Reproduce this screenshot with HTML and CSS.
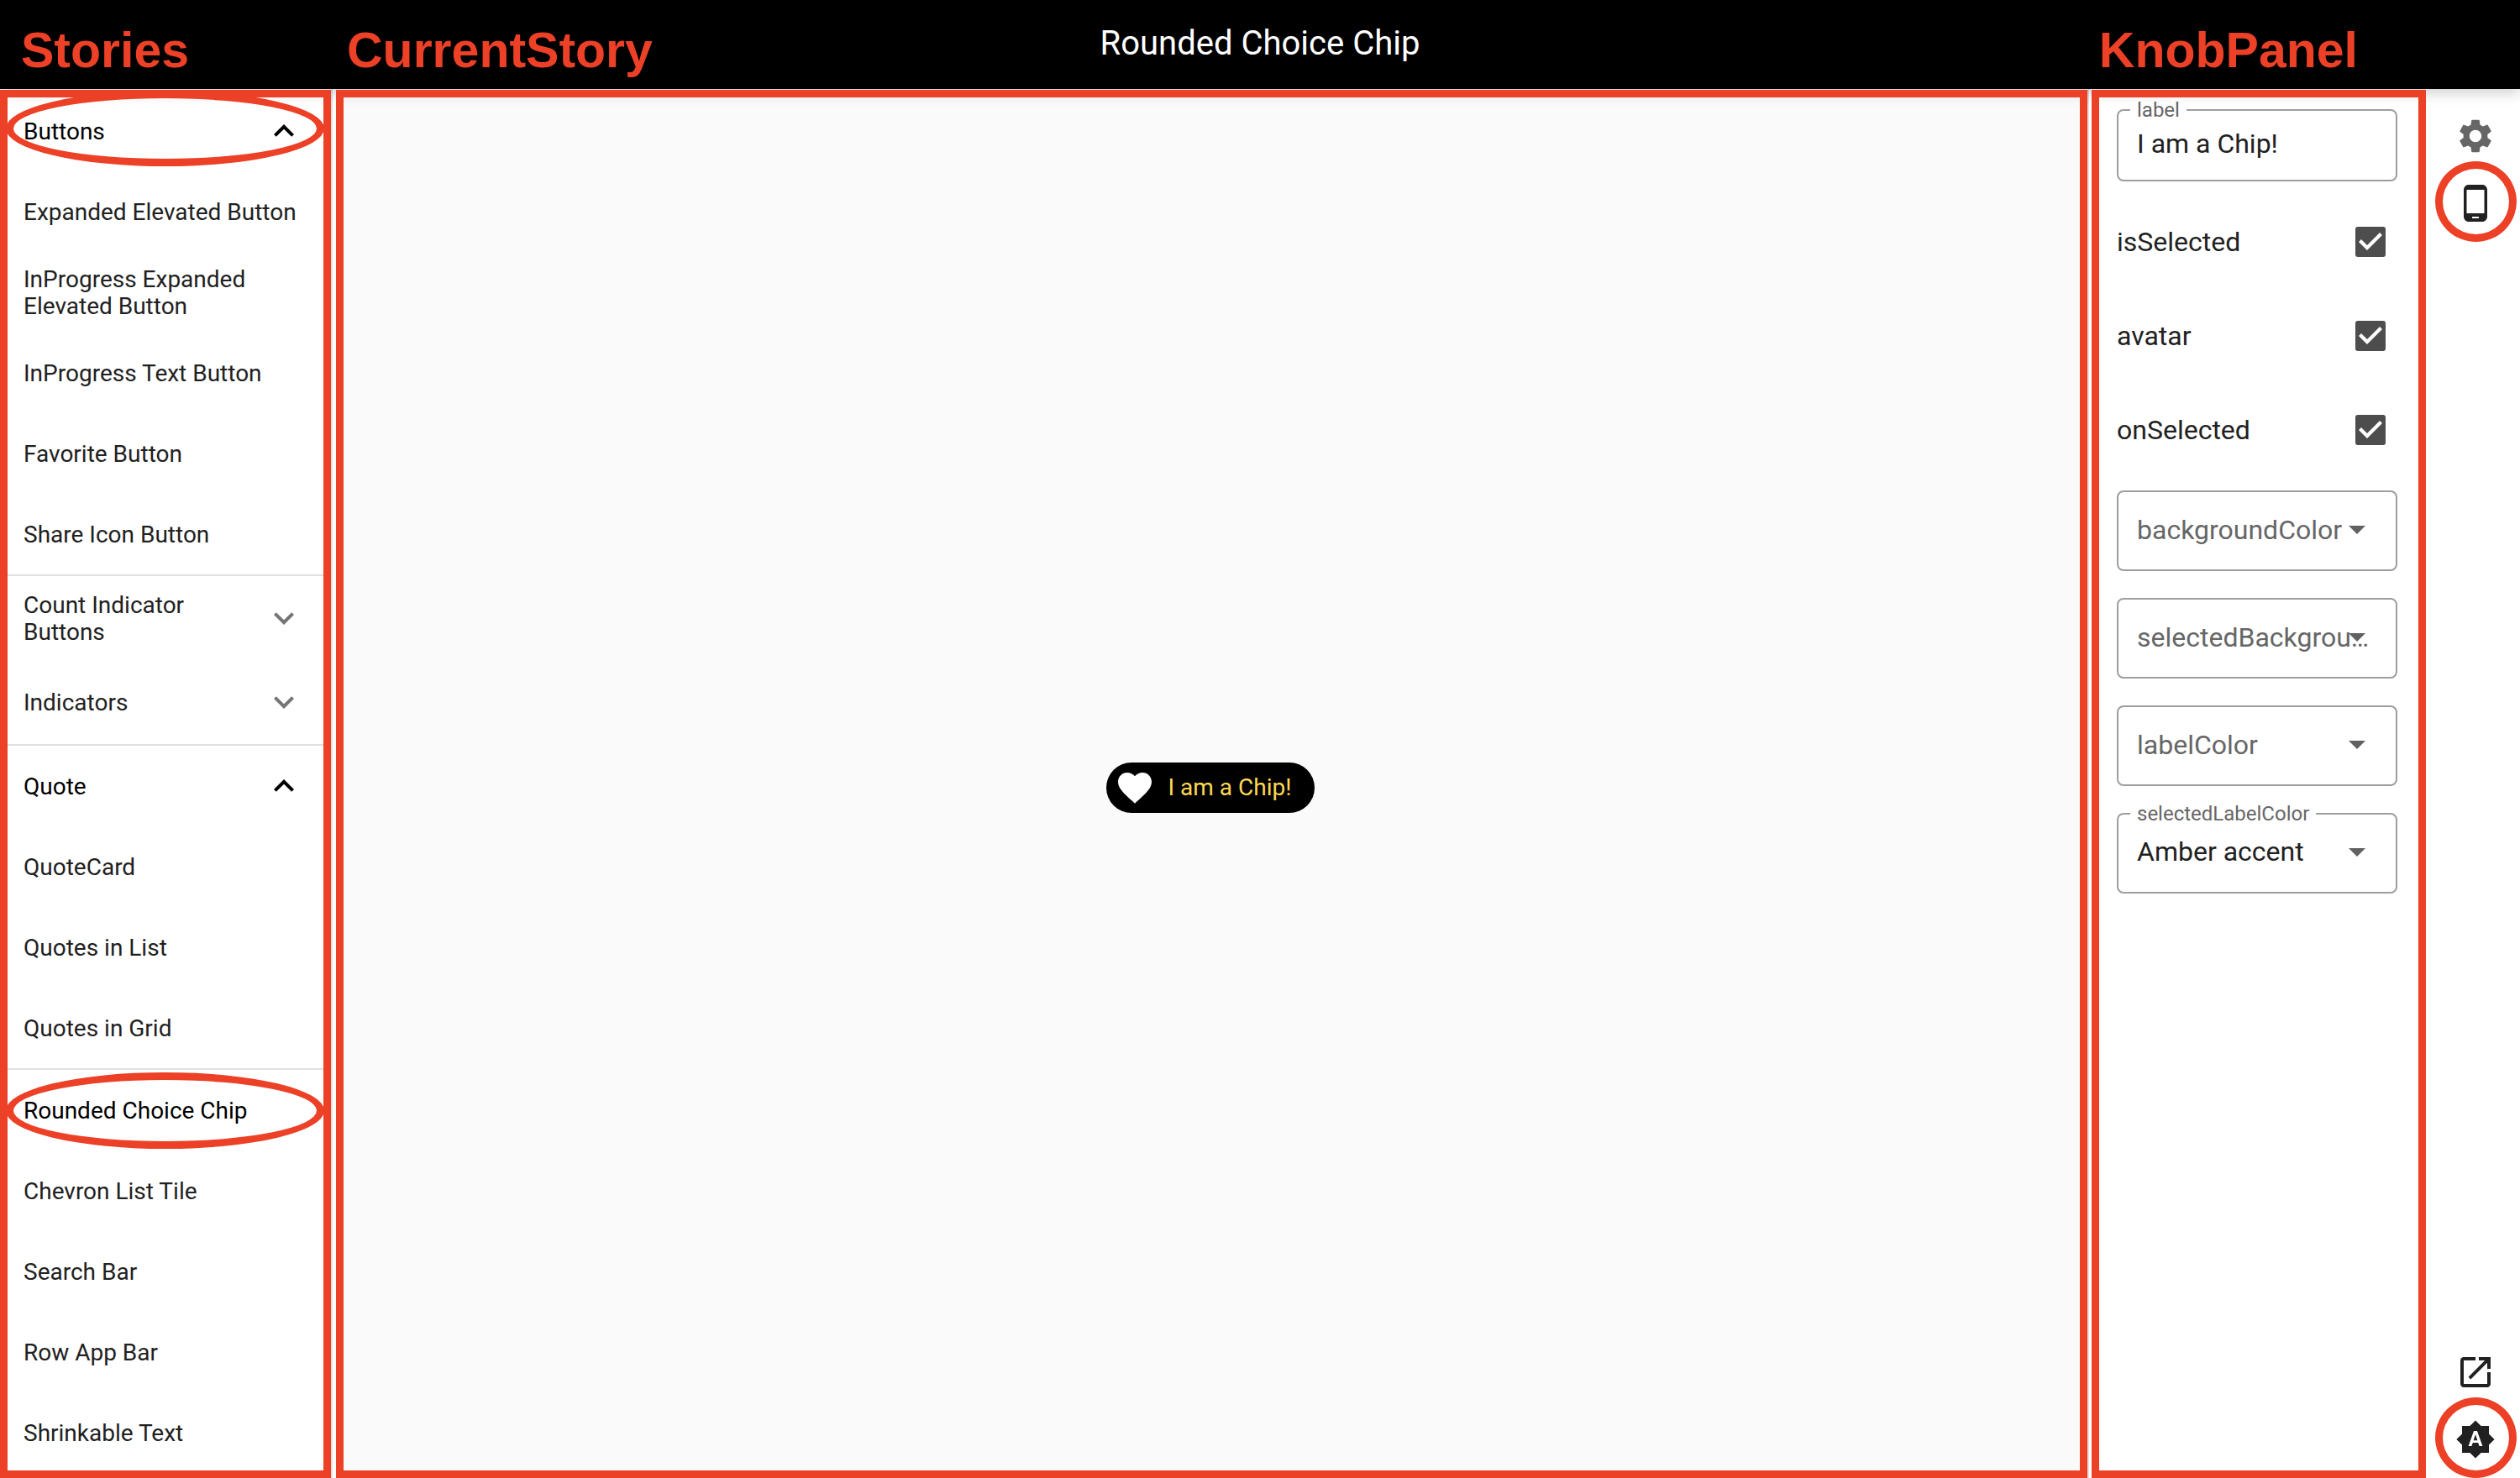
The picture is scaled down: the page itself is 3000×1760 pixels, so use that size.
FILE: index.html
```html
<!DOCTYPE html>
<html lang="en">
<head>
<meta charset="utf-8">
<title>Rounded Choice Chip</title>
<meta name="viewport" content="width=device-width, initial-scale=1">
<link rel="stylesheet" href="styles.css">
</head>
<body>
<svg class="sprite" aria-hidden="true">
  <symbol id="less" viewBox="0 0 24 24"><path d="M12 8l-6 6 1.410 1.410L12 10.830l4.590 4.580L18 14z"/></symbol>
  <symbol id="more" viewBox="0 0 24 24"><path d="M16.590 8.590L12 13.170 7.410 8.590 6 10l6 6 6-6z"/></symbol>
  <symbol id="drop" viewBox="0 0 24 24"><path d="M7 10l5 5 5-5z"/></symbol>
</svg>
<div class="app">
  <header class="topbar">
    <div class="notes notes-start">
      <span class="note note-stories">Stories</span>
      <span class="note">CurrentStory</span>
    </div>
    <h1 class="title">Rounded Choice Chip</h1>
    <div class="notes notes-end"><span class="note">KnobPanel</span></div>
  </header>

  <div class="workspace">
    <nav class="stories framed" aria-label="Stories">
      <details class="group" open>
        <summary class="row ringed">Buttons<svg class="icon"><use href="#less"/></svg></summary>
        <a class="row" href="#expanded-elevated-button">Expanded Elevated Button</a>
        <a class="row" href="#inprogress-expanded-elevated-button">InProgress Expanded Elevated Button</a>
        <a class="row" href="#inprogress-text-button">InProgress Text Button</a>
        <a class="row" href="#favorite-button">Favorite Button</a>
        <a class="row" href="#share-icon-button">Share Icon Button</a>
      </details>
      <details class="group">
        <summary class="row">Count Indicator Buttons<svg class="icon"><use href="#more"/></svg></summary>
      </details>
      <details class="group">
        <summary class="row">Indicators<svg class="icon"><use href="#more"/></svg></summary>
      </details>
      <details class="group" open>
        <summary class="row">Quote<svg class="icon"><use href="#less"/></svg></summary>
        <a class="row" href="#quote-card">QuoteCard</a>
        <a class="row" href="#quotes-in-list">Quotes in List</a>
        <a class="row" href="#quotes-in-grid">Quotes in Grid</a>
      </details>
      <a class="row row-current ringed" href="#rounded-choice-chip" aria-current="page">Rounded Choice Chip</a>
      <a class="row" href="#chevron-list-tile">Chevron List Tile</a>
      <a class="row" href="#search-bar">Search Bar</a>
      <a class="row" href="#row-app-bar">Row App Bar</a>
      <a class="row" href="#shrinkable-text">Shrinkable Text</a>
    </nav>
    <div class="divider"></div>

    <main class="story framed">
      <button class="chip" type="button" aria-pressed="true">
        <svg class="icon" viewBox="0 0 24 24"><path d="M12 21.350l-1.450-1.320C5.400 15.360 2 12.280 2 8.500 2 5.420 4.420 3 7.500 3c1.740 0 3.410.810 4.500 2.090C13.090 3.810 14.760 3 16.500 3 19.580 3 22 5.420 22 8.500c0 3.780-3.400 6.860-8.550 11.540L12 21.350z"/></svg>
        I am a Chip!
      </button>
    </main>
    <div class="divider divider-narrow"></div>

    <form class="knobs framed" aria-label="Knobs">
      <div class="field field-text">
        <input class="control" id="label" type="text" value="I am a Chip!">
        <label class="float" for="label">label</label>
      </div>
      <div class="checks">
        <label class="check">isSelected<input type="checkbox" checked></label>
        <label class="check">avatar<input type="checkbox" checked></label>
        <label class="check">onSelected<input type="checkbox" checked></label>
      </div>
      <div class="selects">
        <div class="field">
          <select class="control" id="bg"><option></option></select>
          <label class="hint" for="bg">backgroundColor</label>
          <svg class="arrow"><use href="#drop"/></svg>
        </div>
        <div class="field">
          <select class="control" id="sbg"><option></option></select>
          <label class="hint" for="sbg">selectedBackgroundColor</label>
          <svg class="arrow"><use href="#drop"/></svg>
        </div>
        <div class="field">
          <select class="control" id="lc"><option></option></select>
          <label class="hint" for="lc">labelColor</label>
          <svg class="arrow"><use href="#drop"/></svg>
        </div>
        <div class="field">
          <select class="control" id="slc"><option>Amber accent</option></select>
          <label class="float" for="slc">selectedLabelColor</label>
          <svg class="arrow"><use href="#drop"/></svg>
        </div>
      </div>
    </form>

    <aside class="rail">
      <button class="tool tool-muted" type="button" aria-label="Settings"><svg class="icon" viewBox="0 0 24 24"><path d="M19.140 12.940c.04-.3.06-.61.06-.94 0-.32-.02-.64-.07-.94l2.030-1.580c.18-.14.23-.41.12-.61l-1.920-3.320c-.12-.22-.37-.29-.59-.22l-2.390.96c-.5-.38-1.030-.7-1.620-.94l-.36-2.540c-.04-.24-.24-.41-.48-.41h-3.840c-.24 0-.43.17-.47.41l-.36 2.540c-.59.24-1.130.57-1.620.94l-2.390-.96c-.22-.08-.47 0-.59.22L2.740 8.870c-.12.21-.08.47.12.61l2.030 1.580c-.05.3-.09.63-.09.94s.02.64.07.94l-2.030 1.580c-.18.14-.23.41-.12.61l1.920 3.320c.12.22.37.29.59.22l2.390-.96c.5.38 1.030.7 1.620.94l.36 2.540c.05.24.24.41.48.41h3.840c.24 0 .44-.17.47-.41l.36-2.540c.59-.24 1.130-.56 1.620-.94l2.390.96c.22.08.47 0 .59-.22l1.920-3.320c.12-.22.07-.47-.12-.61l-2.010-1.580zM12 15.600c-1.980 0-3.600-1.620-3.600-3.600s1.620-3.600 3.600-3.600 3.600 1.620 3.600 3.600-1.620 3.600-3.600 3.600z"/></svg></button>
      <button class="tool circled" type="button" aria-label="Device frame"><svg class="icon" viewBox="0 0 24 24"><path d="M16 1H8C6.340 1 5 2.340 5 4v16c0 1.660 1.340 3 3 3h8c1.660 0 3-1.340 3-3V4c0-1.660-1.340-3-3-3zm-2 20h-4v-1h4v1zm3.250-3H6.750V4h10.500v14z"/></svg></button>
      <button class="tool tool-push" type="button" aria-label="Open in new window"><svg class="icon" viewBox="0 0 24 24"><path d="M19 19H5V5h7V3H5c-1.110 0-2 .9-2 2v14c0 1.100.89 2 2 2h14c1.100 0 2-.9 2-2v-7h-2v7zM14 3v2h3.590l-9.830 9.830 1.410 1.410L19 6.410V10h2V3h-7z"/></svg></button>
      <button class="tool circled" type="button" aria-label="Automatic brightness"><svg class="icon" viewBox="0 0 24 24"><path d="M10.850 12.650h2.300L12 9l-1.150 3.650zM20 8.690V4h-4.690L12 .69 8.690 4H4v4.690L.69 12 4 15.310V20h4.690L12 23.310 15.310 20H20v-4.690L23.310 12 20 8.690zM14.300 16l-.7-2h-3.200l-.7 2H7.800L11 7h2l3.200 9h-1.900z"/></svg></button>
    </aside>
  </div>
</div>
</body>
</html>
```
FILE: styles.css
```css
:root {
  --mark: #ec4027;
  --ink: #212121;
  --muted: #666;
}

* { box-sizing: border-box; }

body {
  margin: 0;
  background: #fff;
  color: var(--ink);
  font: 28px/32px Roboto, "Noto Sans", sans-serif;
}

button, input, select { margin: 0; font: inherit; color: inherit; }

.sprite { position: absolute; width: 0; height: 0; }

.icon { flex: none; width: 48px; height: 48px; fill: currentColor; }

.app { display: flex; flex-direction: column; min-height: 100vh; }

/* Top bar */
.topbar {
  position: relative;
  z-index: 1;
  display: grid;
  grid-template-columns: 1fr auto 1fr;
  align-items: center;
  height: 106px;
  background: #000;
  box-shadow: 0 4px 16px rgba(0, 0, 0, .2);
}

.title { margin: 0; padding-bottom: 2px; color: #fff; font-size: 40px; font-weight: 400; line-height: 48px; }

.notes { display: flex; padding-top: 14px; }
.notes-start { padding-left: 25px; }
.notes-end { justify-content: flex-end; padding-right: 193px; }

.note {
  color: var(--mark);
  font: bold 59px/64px "Liberation Sans", Arial, sans-serif;
}
.note-stories { width: 388px; }

/* Columns */
.workspace { flex: 1; display: flex; }

.framed { position: relative; }
.framed::after {
  content: "";
  position: absolute;
  z-index: 2;
  inset: 1px 0 0;
  border: 9px solid var(--mark);
  pointer-events: none;
}

.divider { flex: none; width: 6px; border-left: 2px solid #e0e0e0; }
.divider-narrow { width: 5px; }

/* Story list */
.stories { flex: none; width: 394px; padding-bottom: 6px; }

.group { border: solid transparent; border-width: 2px 0; }
.group[open] { border-color: #e0e0e0; }
.group:first-child { border-top-color: transparent; }

.row {
  position: relative;
  display: flex;
  align-items: center;
  justify-content: space-between;
  gap: 32px;
  min-height: 96px;
  padding: 2px 32px 0 28px;
  color: var(--ink);
  text-decoration: none;
  list-style: none;
  cursor: pointer;
}
.row .icon { margin-top: -2px; color: #757575; }
.group[open] > summary, .group[open] > summary .icon, .row-current { color: #000; }

.ringed::before {
  content: "";
  position: absolute;
  z-index: 2;
  inset: 3px 8px 2px 7px;
  border: 9px solid var(--mark);
  border-radius: 50%;
}
summary.ringed::before { inset: 0 8px 6px 7px; }

/* Story canvas */
.story {
  flex: 1;
  display: flex;
  align-items: center;
  justify-content: center;
  padding: 10px 3px 0 0;
  background: #fafafa;
}

.chip {
  display: flex;
  align-items: center;
  gap: 16px;
  height: 60px;
  padding: 0 28px 0 10px;
  border: 0;
  border-radius: 30px;
  background: #000;
  color: #ffd953;
}
.chip .icon { color: #fff; }

/* Knobs */
.knobs {
  flex: none;
  width: 398px;
  padding: 24px 34px 16px 30px;
  font-size: 32px;
  line-height: 40px;
}

.field { position: relative; height: 96px; }
.field-text { height: 86px; }

.control {
  width: 100%;
  height: 100%;
  padding: 0 56px 4px 22px;
  border: 2px solid #9e9e9e;
  border-radius: 8px;
  background: none;
  appearance: none;
}
.field-text .control { padding-right: 22px; }

.hint, .float { position: absolute; color: var(--muted); white-space: nowrap; pointer-events: none; }
.hint { inset: 27px 28px auto 24px; overflow: hidden; text-overflow: ellipsis; }
.float {
  top: -15px;
  left: 16px;
  padding: 0 8px;
  background: #fff;
  font-size: 24px;
  line-height: 32px;
}

.arrow {
  position: absolute;
  top: 22px;
  right: 24px;
  width: 48px;
  height: 48px;
  fill: #616161;
  pointer-events: none;
}

.checks { padding: 16px 0; }

.check { display: flex; align-items: center; justify-content: space-between; height: 112px; padding-right: 14px; }
.check input {
  appearance: none;
  width: 36px;
  height: 36px;
  border-radius: 3px;
  background: #4d4d4d;
  display: grid;
  place-items: center;
}
.check input:checked::before {
  content: "";
  width: 28px;
  height: 22px;
  background: #fff;
  clip-path: polygon(0 11px, 3px 8px, 10px 15px, 25px 0, 28px 3px, 10px 21px);
}

.selects { display: grid; gap: 32px; }

/* Tool rail */
.rail {
  flex: none;
  display: flex;
  flex-direction: column;
  align-items: flex-end;
  width: 112px;
  padding: 16px 13px 6px 0;
}

.tool {
  position: relative;
  display: grid;
  place-items: center;
  width: 80px;
  height: 80px;
  padding: 0;
  border: 0;
  background: none;
}
.tool-muted { color: var(--muted); }
.tool-push { margin-top: auto; }

.circled::after {
  content: "";
  position: absolute;
  inset: -10px -9px -6px -8px;
  border: 9px solid var(--mark);
  border-radius: 50%;
}
```
